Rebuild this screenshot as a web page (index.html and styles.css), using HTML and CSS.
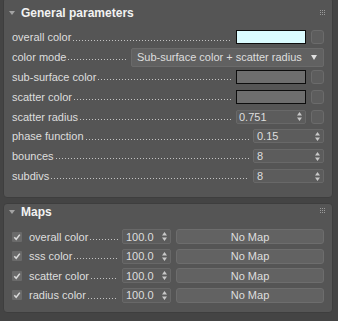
FILE: index.html
```html
<!DOCTYPE html>
<html lang="en">
<head>
    <meta charset="UTF-8">
    <title>Subsurface parameters</title>
    <link rel="stylesheet" href="styles.css">
</head>
<body>
    <div class="page">
        <section class="panel general">
            <header class="panel-head">
                <span class="caret"></span>
                <h2>General parameters</h2>
                <svg class="grip" width="5" height="5" viewBox="0 0 5 5"><g fill="#9a9a9a"><rect x="0" y="0" width="1" height="1"/><rect x="2" y="0" width="1" height="1"/><rect x="4" y="0" width="1" height="1"/><rect x="0" y="2" width="1" height="1"/><rect x="2" y="2" width="1" height="1"/><rect x="4" y="2" width="1" height="1"/><rect x="0" y="4" width="1" height="1"/><rect x="2" y="4" width="1" height="1"/><rect x="4" y="4" width="1" height="1"/></g></svg>
            </header>

            <div class="row">
                <span class="label">overall color</span><span class="leader"></span>
                <span class="swatch cyan"></span><span class="sq"></span>
            </div>
            <div class="row">
                <span class="label">color mode</span><span class="leader"></span>
                <div class="dropdown">
                    <span>Sub-surface color + scatter radius</span>
                    <svg width="6" height="5" viewBox="0 0 6 5"><path d="M0 0H6L3 5Z" fill="#e0e0e0"/></svg>
                </div>
            </div>
            <div class="row">
                <span class="label">sub-surface color</span><span class="leader"></span>
                <span class="swatch grey"></span><span class="sq"></span>
            </div>
            <div class="row">
                <span class="label">scatter color</span><span class="leader"></span>
                <span class="swatch grey"></span><span class="sq"></span>
            </div>
            <div class="row">
                <span class="label">scatter radius</span><span class="leader"></span>
                <div class="spin w70"><span>0.751</span><svg width="5" height="9" viewBox="0 0 5 9"><path d="M0 3.5L2.5 0L5 3.5ZM0 5.5L2.5 9L5 5.5Z" fill="#c8c8c8"/></svg></div>
                <span class="sq"></span>
            </div>
            <div class="row">
                <span class="label">phase function</span><span class="leader"></span>
                <div class="spin w71"><span>0.15</span><svg width="5" height="9" viewBox="0 0 5 9"><path d="M0 3.5L2.5 0L5 3.5ZM0 5.5L2.5 9L5 5.5Z" fill="#c8c8c8"/></svg></div>
            </div>
            <div class="row">
                <span class="label">bounces</span><span class="leader"></span>
                <div class="spin w71"><span>8</span><svg width="5" height="9" viewBox="0 0 5 9"><path d="M0 3.5L2.5 0L5 3.5ZM0 5.5L2.5 9L5 5.5Z" fill="#c8c8c8"/></svg></div>
            </div>
            <div class="row">
                <span class="label">subdivs</span><span class="leader"></span>
                <div class="spin w71"><span>8</span><svg width="5" height="9" viewBox="0 0 5 9"><path d="M0 3.5L2.5 0L5 3.5ZM0 5.5L2.5 9L5 5.5Z" fill="#c8c8c8"/></svg></div>
            </div>
        </section>

        <section class="panel maps">
            <header class="panel-head">
                <span class="caret"></span>
                <h2>Maps</h2>
                <svg class="grip" width="5" height="5" viewBox="0 0 5 5"><g fill="#9a9a9a"><rect x="0" y="0" width="1" height="1"/><rect x="2" y="0" width="1" height="1"/><rect x="4" y="0" width="1" height="1"/><rect x="0" y="2" width="1" height="1"/><rect x="2" y="2" width="1" height="1"/><rect x="4" y="2" width="1" height="1"/><rect x="0" y="4" width="1" height="1"/><rect x="2" y="4" width="1" height="1"/><rect x="4" y="4" width="1" height="1"/></g></svg>
            </header>

            <div class="row">
                <svg class="check" width="10" height="10" viewBox="0 0 10 10"><rect width="10" height="10" rx="1" fill="#6a6a6a"/><path d="M2.3 5.2L4.2 7.3L7.8 2.6" fill="none" stroke="#dadada" stroke-width="1.5"/></svg>
                <span class="label">overall color</span><span class="leader"></span>
                <div class="spin w49"><span>100.0</span><svg width="5" height="9" viewBox="0 0 5 9"><path d="M0 3.5L2.5 0L5 3.5ZM0 5.5L2.5 9L5 5.5Z" fill="#c8c8c8"/></svg></div>
                <button class="nomap">No Map</button>
            </div>
            <div class="row">
                <svg class="check" width="10" height="10" viewBox="0 0 10 10"><rect width="10" height="10" rx="1" fill="#6a6a6a"/><path d="M2.3 5.2L4.2 7.3L7.8 2.6" fill="none" stroke="#dadada" stroke-width="1.5"/></svg>
                <span class="label">sss color</span><span class="leader"></span>
                <div class="spin w49"><span>100.0</span><svg width="5" height="9" viewBox="0 0 5 9"><path d="M0 3.5L2.5 0L5 3.5ZM0 5.5L2.5 9L5 5.5Z" fill="#c8c8c8"/></svg></div>
                <button class="nomap">No Map</button>
            </div>
            <div class="row">
                <svg class="check" width="10" height="10" viewBox="0 0 10 10"><rect width="10" height="10" rx="1" fill="#6a6a6a"/><path d="M2.3 5.2L4.2 7.3L7.8 2.6" fill="none" stroke="#dadada" stroke-width="1.5"/></svg>
                <span class="label">scatter color</span><span class="leader"></span>
                <div class="spin w49"><span>100.0</span><svg width="5" height="9" viewBox="0 0 5 9"><path d="M0 3.5L2.5 0L5 3.5ZM0 5.5L2.5 9L5 5.5Z" fill="#c8c8c8"/></svg></div>
                <button class="nomap">No Map</button>
            </div>
            <div class="row">
                <svg class="check" width="10" height="10" viewBox="0 0 10 10"><rect width="10" height="10" rx="1" fill="#6a6a6a"/><path d="M2.3 5.2L4.2 7.3L7.8 2.6" fill="none" stroke="#dadada" stroke-width="1.5"/></svg>
                <span class="label">radius color</span><span class="leader"></span>
                <div class="spin w49"><span>100.0</span><svg width="5" height="9" viewBox="0 0 5 9"><path d="M0 3.5L2.5 0L5 3.5ZM0 5.5L2.5 9L5 5.5Z" fill="#c8c8c8"/></svg></div>
                <button class="nomap">No Map</button>
            </div>
        </section>
    </div>
</body>
</html>
```

FILE: styles.css
```css
body {
    margin: 0;
    width: 338px;
    height: 321px;
    overflow: hidden;
    background: #444444;
    font-family: "Liberation Sans", Arial, sans-serif;
    font-size: 11px;
    color: #dedede;
}

.page {
    padding: 0 5px 0 3px;
}

.panel {
    box-sizing: border-box;
    background: #555555;
    border: 1px solid #3e3e3e;
    border-radius: 4px;
}

.general {
    margin-top: -3px;
    height: 201px;
}

.maps {
    margin-top: 5px;
    height: 110px;
}

/* panel title bar */
.panel-head {
    display: flex;
    align-items: center;
    padding: 0 7px 0 5px;
}

.general .panel-head {
    height: 29.6px;
}

.maps .panel-head {
    height: 16px;
    margin-bottom: 6.7px;
}

.caret {
    width: 0;
    height: 0;
    border-left: 3.5px solid transparent;
    border-right: 3.5px solid transparent;
    border-top: 4px solid #a3a3a3;
    margin-right: 6px;
}

.panel-head h2 {
    margin: 0;
    font-size: 12px;
    font-weight: bold;
    color: #f2f2f2;
}

.grip {
    margin-left: auto;
}

.maps .grip {
    margin-bottom: 4px;
}

/* parameter rows */
.row {
    display: flex;
    align-items: center;
    height: 19.8px;
    padding: 0 8px;
}

.maps .row {
    height: 19.67px;
}

.label {
    white-space: nowrap;
}

.leader {
    flex: 1;
    align-self: stretch;
    margin: 0 4px 0 2px;
    background: linear-gradient(to right, #c4c4c4 1px, transparent 1px) 0 12px / 3px 1px repeat-x;
}

.swatch {
    box-sizing: border-box;
    width: 70px;
    height: 14px;
    border: 1px solid #0d0d0d;
}

.swatch.cyan {
    background: #dbfcff;
}

.swatch.grey {
    background: #6e6e6e;
}

.sq {
    box-sizing: border-box;
    width: 13px;
    height: 14px;
    margin-left: 5px;
    background: #5d5d5d;
    border: 1px solid #6b6b6b;
    border-radius: 3px;
}

.dropdown {
    box-sizing: border-box;
    width: 193px;
    height: 19px;
    display: flex;
    align-items: center;
    justify-content: space-between;
    padding: 0 6px 0 5px;
    background: #616161;
    border: 1px solid #6a6a6a;
    border-radius: 2px;
}

.spin {
    box-sizing: border-box;
    display: flex;
    align-items: center;
    justify-content: space-between;
    height: 14px;
    padding: 0 3px 0 2px;
    background: #5c5c5c;
    border: 1px solid #686868;
    border-radius: 2px;
}

.spin.w70 {
    width: 70px;
}

.spin.w71 {
    width: 71px;
    padding-left: 3px;
}

.spin.w49 {
    width: 49px;
    height: 15px;
    padding-left: 3px;
}

.check {
    margin-right: 7px;
}

.nomap {
    box-sizing: border-box;
    width: 148px;
    height: 15px;
    margin-left: 5px;
    padding: 0;
    background: #626262;
    border: 1px solid #6d6d6d;
    border-radius: 3px;
    font-family: "Liberation Sans", Arial, sans-serif;
    font-size: 11px;
    color: #dedede;
}
```
